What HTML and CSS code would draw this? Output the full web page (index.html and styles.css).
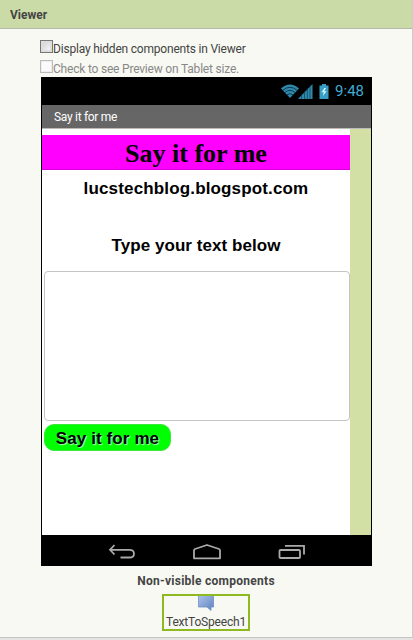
FILE: index.html
```html
<!DOCTYPE html>
<html lang="en">
<head>
    <meta charset="UTF-8">
    <meta name="viewport" content="width=device-width, initial-scale=1.0">
    <title>Viewer</title>
    <link rel="stylesheet" href="styles.css">
</head>
<body>
    <div class="viewer">
        <div class="viewer-header">Viewer</div>
        <div class="viewer-content">
            <label class="option">
                <input type="checkbox" class="focused">
                <span>Display hidden components in Viewer</span>
            </label>
            <label class="option disabled">
                <input type="checkbox" disabled>
                <span>Check to see Preview on Tablet size.</span>
            </label>

            <div class="phone">
                <div class="status-bar">
                    <svg class="wifi" width="20" height="16" viewBox="0 0 20 16">
                        <path d="M1 5.5Q10 -2.3 19 5.5L10 15Z" fill="#2f89ad"/>
                        <path d="M2.8 7.3Q10 1.3 17.2 7.3M4.8 9.6Q10 5.1 15.2 9.6M7 11.9Q10 9.3 13 11.9" fill="none" stroke="#04151c" stroke-width="0.7"/>
                    </svg>
                    <svg class="signal" width="15" height="15" viewBox="0 0 15 15">
                        <path d="M0 15L14.5 0V15Z" fill="#2f89ad"/>
                        <path d="M3.5 10V15M6.5 7V15M9.3 4V15M12 2V15" stroke="#0a3040" stroke-width="0.6"/>
                    </svg>
                    <svg class="battery" width="10" height="15" viewBox="0 0 10 15">
                        <path d="M3 0H7V1.5H9.5V15H.5V1.5H3Z" fill="#38a0c6"/>
                        <path d="M5.5 4L2.5 8.2H4.8L3.8 12L7.6 7.3H5.2L7 4Z" fill="#e4fbff"/>
                    </svg>
                    <span class="time">9:48</span>
                </div>
                <div class="title-bar"><span>Say it for me</span></div>
                <div class="screen">
                    <div class="form">
                        <div class="banner"><span>Say it for me</span></div>
                        <div class="blog"><span>lucstechblog.blogspot.com</span></div>
                        <div class="prompt"><span>Type your text below</span></div>
                        <textarea class="textbox"></textarea>
                        <button class="say-button"><span>Say it for me</span></button>
                    </div>
                </div>
                <div class="nav-bar">
                    <svg width="28" height="16" viewBox="0 0 28 16">
                        <path d="M6.5 1L2 5.8L6.5 10.5M2 5.8H21.5C27.5 5.8 27.5 13.5 21.5 13.5H12.5" fill="none" stroke="#aaa" stroke-width="1.8"/>
                    </svg>
                    <svg width="30" height="16" viewBox="0 0 30 16">
                        <path d="M2 14.3V6.5Q2 5.5 3 5L15 1L27 5Q28 5.5 28 6.5V14.3Z" fill="none" stroke="#aaa" stroke-width="1.8" stroke-linejoin="round"/>
                    </svg>
                    <svg width="28" height="16" viewBox="0 0 28 16">
                        <rect x="1.5" y="6" width="20.5" height="8" rx="1" fill="none" stroke="#aaa" stroke-width="1.8"/>
                        <path d="M7 1.8H26V10.5" fill="none" stroke="#aaa" stroke-width="1.8"/>
                    </svg>
                </div>
            </div>

            <div class="nonvisible">
                <div class="nonvisible-title">Non-visible components</div>
                <div class="component">
                    <svg width="16" height="15" viewBox="0 0 16 15">
                        <defs>
                            <linearGradient id="bubble" x1="0" y1="0" x2="1" y2="1">
                                <stop offset="0" stop-color="#a9c3e8"/>
                                <stop offset="1" stop-color="#5f80bd"/>
                            </linearGradient>
                        </defs>
                        <path d="M.5 0H15.5V11H13V14.5L9 11H.5Z" fill="url(#bubble)"/>
                        <path d="M.5 0V11H9L13 14.5V11H15.5V0" fill="none" stroke="#6f8fc6" stroke-width="0.8"/>
                    </svg>
                    <span>TextToSpeech1</span>
                </div>
            </div>
        </div>
    </div>
</body>
</html>
```
FILE: styles.css
```css
* {
    box-sizing: border-box;
}
body {
    margin: 0;
    height: 640px;
    overflow: hidden;
    background-color: #e4e4e2;
    font-family: Roboto, Arial, sans-serif;
    font-size: 12px;
    color: #444;
}
.viewer {
    height: 638px;
    background-color: #f8f9f2;
    border-right: 1px solid #ccc;
    border-bottom: 1px solid #c4c4c4;
}
.viewer-header {
    height: 29px;
    padding-left: 10px;
    line-height: 30px;
    font-weight: bold;
    background-color: #cbdba7;
    border-bottom: 1px solid #b5b8ac;
}
.viewer-content {
    width: 331px;
    margin-left: 41px;
    padding-top: 10px;
}
.option {
    display: flex;
    align-items: flex-start;
    height: 20px;
    line-height: 21px;
    letter-spacing: -0.2px;
    white-space: nowrap;
}
.option input {
    appearance: none;
    flex: none;
    width: 13px;
    height: 13px;
    margin: 1px 0 0 -1px;
    border: 1px solid #999;
    background: linear-gradient(135deg, #c9cbd0, #fff);
    box-shadow: inset 0 0 0 1px #eee;
}
.option input.focused {
    border-color: #777;
    box-shadow: inset 0 0 0 2px #ddd;
}
.option.disabled {
    height: 18px;
    color: #888;
}
.option.disabled input {
    border-color: #bbb;
    background: #fafafa;
}
.phone {
    width: 331px;
    height: 489px;
    background-color: #000;
}
.status-bar {
    display: flex;
    align-items: center;
    justify-content: flex-end;
    height: 28px;
    padding-right: 8px;
    color: #41abd4;
}
.signal {
    margin-left: -2px;
}
.battery {
    margin-left: 6px;
}
.time {
    margin-left: 6px;
    font-size: 15px;
}
.title-bar {
    height: 24px;
    margin: 0 1px;
    padding-left: 12px;
    line-height: 24px;
    letter-spacing: -0.3px;
    color: #fff;
    background-color: #666;
    border-bottom: 1px solid #bbb;
}
.screen {
    height: 406px;
    margin: 0 1px;
    padding-right: 21px;
    background-color: #d2dfa5;
}
.form {
    height: 406px;
    padding-top: 6px;
    background-color: #fff;
    color: #000;
    font-family: "Liberation Sans", Arial, sans-serif;
    font-size: 17px;
    font-weight: bold;
    text-align: center;
}
.banner {
    height: 35px;
    line-height: 37px;
    font-family: "Liberation Serif", "Times New Roman", serif;
    font-size: 26px;
    background-color: #f0f;
    border-bottom: 1px solid #d800d8;
}
.blog {
    height: 57px;
    line-height: 38px;
    letter-spacing: 0.15px;
}
.prompt {
    height: 44px;
    line-height: 38px;
    letter-spacing: 0.05px;
}
.textbox {
    display: block;
    width: 306px;
    height: 150px;
    margin-left: 2px;
    border: 1px solid #c4c4c4;
    border-radius: 4px;
    background-color: #fff;
    resize: none;
}
.say-button {
    display: block;
    width: 127px;
    height: 27px;
    margin: 3px 0 0 2px;
    padding: 2px 0 0;
    border: 1px solid #3ce83c;
    border-radius: 10px;
    background-color: #0f0;
    color: #000;
    font: bold 17px "Liberation Sans", Arial, sans-serif;
    letter-spacing: 0.1px;
    text-shadow: 1px 1px 1px #b8ffb8;
}
.nav-bar {
    display: flex;
    align-items: center;
    justify-content: space-between;
    height: 31px;
    padding: 3px 66px 0 67px;
}
.nonvisible {
    display: flex;
    flex-direction: column;
    align-items: center;
    margin-left: -1px;
}
.nonvisible-title {
    height: 28px;
    line-height: 31px;
    font-weight: bold;
    letter-spacing: 0.27px;
}
.component {
    display: flex;
    flex-direction: column;
    align-items: center;
    width: 88px;
    height: 37px;
    border: 2px solid #8fb921;
    line-height: 23px;
    letter-spacing: -0.2px;
}
.component svg {
    flex: none;
}
```
